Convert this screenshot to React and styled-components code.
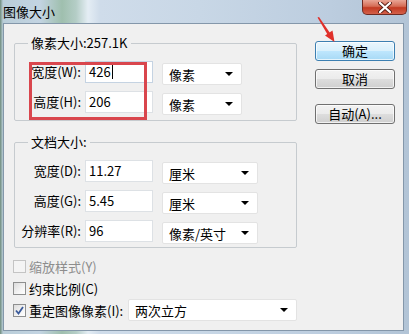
import styled, { createGlobalStyle } from "styled-components";

const GlobalStyle = createGlobalStyle`
    html, body {
        margin: 0;
        padding: 0;
        background: #ffffff;
    }
    body {
        font-family: "Noto Sans CJK SC", "Microsoft YaHei", sans-serif;
        font-size: 13px;
        color: #000000;
    }
`;

const pixelRows = [
    { label: "宽度(W):", value: "426", unit: "像素", caret: true },
    { label: "高度(H):", value: "206", unit: "像素" },
];

const documentRows = [
    { label: "宽度(D):", value: "11.27", unit: "厘米" },
    { label: "高度(G):", value: "5.45", unit: "厘米" },
    { label: "分辨率(R):", value: "96", unit: "像素/英寸" },
];

export default function App() {
    return (
        <>
            <GlobalStyle />
            <Frame data-component="image-size-dialog">
                <TitleBar>
                    <Title>图像大小</Title>
                    <CloseButton>
                        <svg width="14" height="11" viewBox="0 0 14 11">
                            <path d="M2 1 L12 10 M12 1 L2 10" stroke="#5a2018" strokeWidth="4" strokeLinecap="round" />
                            <path d="M2 1 L12 10 M12 1 L2 10" stroke="#ffffff" strokeWidth="2.2" strokeLinecap="round" />
                        </svg>
                    </CloseButton>
                </TitleBar>
                <Client>
                    <MainColumn>
                        <Group $gap={13}>
                            <Legend>像素大小:257.1K</Legend>
                            <FieldGrid $bottom={5}>
                                {pixelRows.map((row) => (
                                    <Field key={row.label} {...row} selectWidth={80} />
                                ))}
                            </FieldGrid>
                        </Group>
                        <Group $gap={0}>
                            <Legend>文档大小:</Legend>
                            <FieldGrid $bottom={3}>
                                {documentRows.map((row) => (
                                    <Field key={row.label} {...row} selectWidth={96} />
                                ))}
                            </FieldGrid>
                        </Group>
                        <CheckList>
                            <CheckRow $disabled>
                                <CheckBox $disabled />
                                <span>缩放样式(Y)</span>
                            </CheckRow>
                            <CheckRow>
                                <CheckBox />
                                <span>约束比例(C)</span>
                            </CheckRow>
                            <CheckRow>
                                <CheckBox>
                                    <svg width="9" height="9" viewBox="0 0 9 9">
                                        <path d="M1 4.5 L3.5 7.5 L8 1" fill="none" stroke="#3a5a9a" strokeWidth="1.8" />
                                    </svg>
                                </CheckBox>
                                <span>重定图像像素(I):</span>
                                <Select $width={169} $offset={0} $push>
                                    <span>两次立方</span>
                                    <Caret />
                                </Select>
                            </CheckRow>
                        </CheckList>
                    </MainColumn>
                    <ButtonColumn>
                        <Button $primary $top={6}>确定</Button>
                        <Button $top={8}>取消</Button>
                        <Button $top={15}>自动(A)...</Button>
                    </ButtonColumn>
                </Client>
                <Highlight />
                <Arrow width="30" height="32" viewBox="0 0 30 32">
                    <path d="M5.5 4.5 L7 4 L18 20 L15.5 21.5 Z" fill="#e0302a" />
                    <path d="M22.5 29 L13 22.5 L20.5 17.5 Z" fill="#e0302a" />
                </Arrow>
            </Frame>
        </>
    );
}

function Field({ label, value, unit, caret, selectWidth }) {
    return (
        <>
            <FieldLabel>{label}</FieldLabel>
            <TextBox $focused={caret}>
                {value}
                {caret && <TextCaret />}
            </TextBox>
            <Select $width={selectWidth} $offset={2}>
                <span>{unit}</span>
                <Caret />
            </Select>
        </>
    );
}

const Frame = styled.div`
    position: relative;
    width: 409px;
    height: 334px;
    box-sizing: border-box;
    padding: 0 5px 3px 3px;
    display: flex;
    flex-direction: column;
    background: linear-gradient(90deg, #6f8c7c 0px, #b9cdd8 3px, #c3d4e2 40px, #9fbfae 62px, #b4cdc6 76px, #e4edf4 88px, #cfdcea 100px, #c8d7e6 200px, #bccddf 330px, #b2c4d6 409px);
    overflow: hidden;
`;

const TitleBar = styled.div`
    height: 23px;
    flex: none;
    display: flex;
    align-items: flex-start;
    justify-content: space-between;
`;

const Title = styled.div`
    padding-top: 3px;
    font-size: 13px;
    line-height: 17px;
    color: #000000;
`;

const CloseButton = styled.div`
    width: 45px;
    height: 15px;
    margin-right: -3px;
    box-sizing: border-box;
    border: 1px solid #6e2a22;
    border-top: none;
    border-radius: 0 0 5px 5px;
    background: linear-gradient(180deg, #e9a595 0%, #d56c55 45%, #c23a22 55%, #d4614a 100%);
    display: flex;
    align-items: center;
    justify-content: center;
`;

const Client = styled.div`
    flex: 1;
    display: flex;
    box-sizing: border-box;
    border: 1px solid #8497aa;
    background: #f0f0f0;
    padding: 11px 0 0 10px;
`;

const MainColumn = styled.div`
    width: 283px;
    display: flex;
    flex-direction: column;
`;

const Group = styled.fieldset`
    margin: 0 0 ${({ $gap }) => $gap}px 0;
    padding: 0;
    border: 1px solid #c6cbcf;
    border-radius: 2px;
    min-width: 0;
`;

const Legend = styled.legend`
    margin-left: 13px;
    padding: 0 3px;
    font-size: 13px;
    line-height: 16px;
    color: #000000;
`;

const FieldGrid = styled.div`
    display: grid;
    grid-template-columns: 66px 68px auto;
    column-gap: 4px;
    row-gap: 6px;
    align-items: start;
    padding: 10px 0 ${({ $bottom }) => $bottom}px 0;
`;

const FieldLabel = styled.div`
    height: 22px;
    line-height: 22px;
    text-align: right;
    white-space: nowrap;
    font-size: 13px;
`;

const TextBox = styled.div`
    height: 22px;
    box-sizing: border-box;
    border: 1px solid ${({ $focused }) => ($focused ? "#c5d3e2" : "#dde1e5")};
    background: #ffffff;
    padding: 0 3px;
    line-height: 20px;
    font-size: 13px;
    display: flex;
    align-items: center;
`;

const TextCaret = styled.span`
    display: inline-block;
    width: 1px;
    height: 14px;
    margin-left: 1px;
    background: #000000;
`;

const Select = styled.div`
    width: ${({ $width }) => $width}px;
    height: 22px;
    margin-top: ${({ $offset }) => $offset}px;
    margin-left: ${({ $offset, $push }) => ($push ? "auto" : $offset ? "5px" : "0")};
    box-sizing: border-box;
    border: 1px solid #e3e3e3;
    border-radius: 2px;
    background: #ffffff;
    padding: 0 8px 0 6px;
    display: flex;
    align-items: center;
    justify-content: space-between;
    font-size: 13px;
    white-space: nowrap;
`;

const Caret = styled.span`
    width: 0;
    height: 0;
    border-left: 4px solid transparent;
    border-right: 4px solid transparent;
    border-top: 4px solid #000000;
`;

const CheckList = styled.div`
    display: flex;
    flex-direction: column;
    padding-top: 7px;
`;

const CheckRow = styled.label`
    height: 22px;
    display: flex;
    align-items: center;
    gap: 3px;
    margin-left: -1px;
    font-size: 13px;
    color: ${({ $disabled }) => ($disabled ? "#8d8d8d" : "#000000")};
    white-space: nowrap;
`;

const CheckBox = styled.span`
    width: 13px;
    height: 13px;
    box-sizing: border-box;
    flex: none;
    border: 1px solid ${({ $disabled }) => ($disabled ? "#c4c4c4" : "#8e8f8f")};
    background: ${({ $disabled }) =>
        $disabled ? "#f4f4f4" : "linear-gradient(135deg, #dcdcdc 0%, #f4f4f4 60%, #ffffff 100%)"};
    display: flex;
    align-items: center;
    justify-content: center;
`;

const ButtonColumn = styled.div`
    display: flex;
    flex-direction: column;
    padding-left: 18px;
`;

const Button = styled.div`
    width: 80px;
    height: 20px;
    margin-top: ${({ $top }) => $top}px;
    box-sizing: border-box;
    border: 1px solid ${({ $primary }) => ($primary ? "#3c7fb1" : "#707070")};
    border-radius: 3px;
    background: ${({ $primary }) =>
        $primary
            ? "linear-gradient(180deg, #eaf6fd 0%, #d9f0fc 50%, #bee6fd 51%, #a7d9f5 100%)"
            : "linear-gradient(180deg, #f2f2f2 0%, #ebebeb 50%, #dddddd 51%, #cfcfcf 100%)"};
    box-shadow: inset 0 0 0 1px rgba(255, 255, 255, 0.7);
    display: flex;
    align-items: center;
    justify-content: center;
    font-size: 13px;
    line-height: 18px;
`;

const Highlight = styled.div`
    position: absolute;
    left: 29px;
    top: 62px;
    width: 118px;
    height: 58px;
    box-sizing: border-box;
    border: 3px solid #d9464d;
    pointer-events: none;
`;

const Arrow = styled.svg`
    position: absolute;
    left: 312px;
    top: 13px;
    pointer-events: none;
`;
